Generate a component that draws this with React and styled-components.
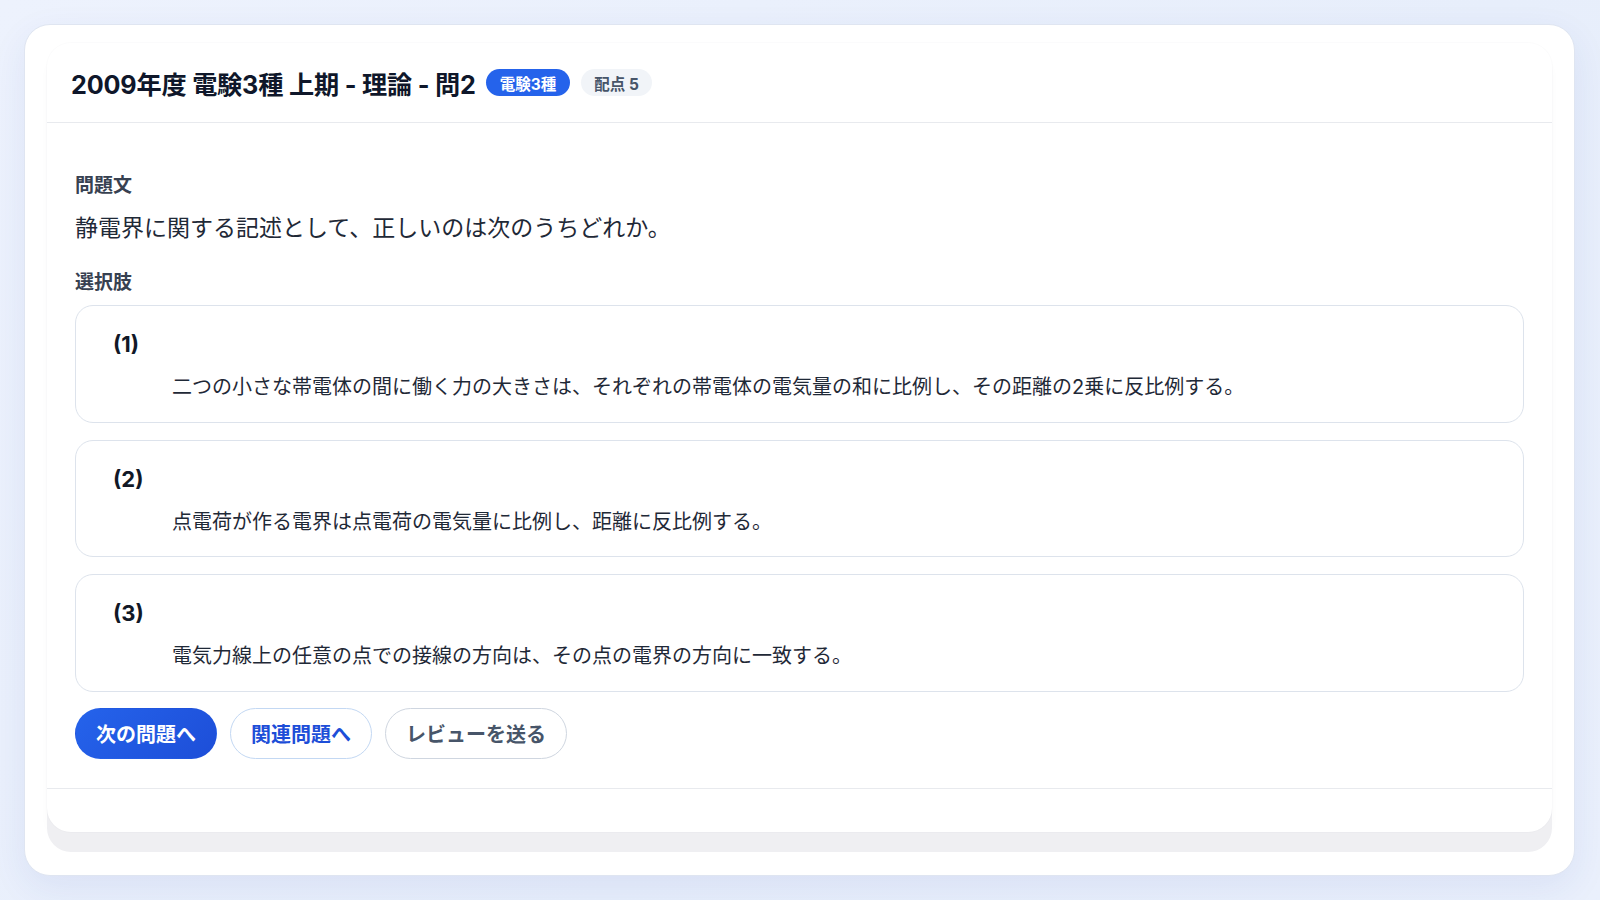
import React from "react";
import styled, { createGlobalStyle } from "styled-components";

const GlobalStyle = createGlobalStyle`
  html, body {
    margin: 0;
    padding: 0;
  }
  body {
    background: linear-gradient(135deg, #edf2fd 0%, #e7eefb 60%, #eaf0fc 100%);
    font-family: Inter, "Noto Sans CJK JP", sans-serif;
    color: #1f2937;
  }
  * {
    box-sizing: border-box;
  }
`;

const Page = styled.div`
  padding: 24px 25px 25px 24px;
`;

const Shell = styled.div`
  background: #fff;
  border: 1px solid #dfe5f1;
  border-radius: 26px;
  box-shadow: 0 12px 36px rgba(37, 70, 160, 0.08);
  padding: 18px 22px 43px 22px;
`;

const Card = styled.div`
  background: #fff;
  border-radius: 24px;
  box-shadow: 0 0 0 1px rgba(15, 23, 42, 0.015), 0 20px 0 #efeff2,
    0 10px 8px rgba(15, 23, 42, 0.025);
`;

const Header = styled.div`
  height: 80px;
  display: flex;
  align-items: center;
  padding: 0 24px;
  border-bottom: 1px solid #e8eaee;
`;

const Title = styled.h1`
  margin: 0;
  font-size: 25.2px;
  font-weight: 700;
  color: #0f172a;
  letter-spacing: -0.2px;
`;

const Badge = styled.span`
  display: inline-flex;
  align-items: center;
  height: 27px;
  padding: 0 ${(p) => (p.$primary ? "14px" : "13px")};
  margin-left: ${(p) => (p.$primary ? "10px" : "11px")};
  border-radius: 999px;
  font-size: 15.5px;
  font-weight: 700;
  background: ${(p) => (p.$primary ? "#2563eb" : "#f1f4f8")};
  color: ${(p) => (p.$primary ? "#fff" : "#475569")};
`;

const Body = styled.div`
  padding: 49px 28px 28.5px 28px;
  display: flex;
  flex-direction: column;
`;

const Label = styled.div`
  font-size: 19px;
  line-height: 28px;
  font-weight: 700;
  color: #374151;
  margin-top: ${(p) => p.$top || "0"};
`;

const Question = styled.p`
  margin: 11px 0 0;
  font-size: 23px;
  line-height: 34px;
  color: #1f2937;
`;

const Options = styled.div`
  margin-top: 8px;
  display: flex;
  flex-direction: column;
  gap: 17px;
`;

const Option = styled.div`
  border: 1px solid #dde3ec;
  border-radius: 18px;
  padding: 23px 36px 19.5px 37px;
  background: #fff;
`;

const OptionNo = styled.div`
  font-size: 22px;
  line-height: 30px;
  font-weight: 700;
  color: #111827;
`;

const OptionText = styled.div`
  margin-top: 13px;
  padding-left: 59px;
  font-size: 20px;
  line-height: 30px;
  color: #1f2937;
`;

const Actions = styled.div`
  margin-top: 16.5px;
  display: flex;
  gap: 13px;
`;

const variants = {
  primary: `
    background: linear-gradient(135deg, #2563eb, #1d4ed8);
    border-color: transparent;
    color: #fff;
  `,
  outline: `
    background: #fff;
    border-color: #c3d8f3;
    color: #1d4ed8;
  `,
  ghost: `
    background: #fff;
    border-color: #cfd6e0;
    color: #475569;
  `,
};

const Button = styled.button`
  height: 51px;
  padding: 0 20px;
  border-radius: 999px;
  border: 1px solid transparent;
  font-family: inherit;
  font-size: 20px;
  font-weight: 700;
  cursor: pointer;
  ${(p) => variants[p.$variant]}
`;

const Footer = styled.div`
  height: 44px;
  border-top: 1px solid #e8eaee;
`;

const options = [
  {
    no: "(1)",
    text: "二つの小さな帯電体の間に働く力の大きさは、それぞれの帯電体の電気量の和に比例し、その距離の2乗に反比例する。",
  },
  {
    no: "(2)",
    text: "点電荷が作る電界は点電荷の電気量に比例し、距離に反比例する。",
  },
  {
    no: "(3)",
    text: "電気力線上の任意の点での接線の方向は、その点の電界の方向に一致する。",
  },
];

export default function App() {
  return (
    <Page>
      <GlobalStyle />
      <Shell>
        <Card>
          <Header>
            <Title>2009年度 電験3種 上期 - 理論 - 問2</Title>
            <Badge $primary>電験3種</Badge>
            <Badge>配点 5</Badge>
          </Header>
          <Body>
            <Label>問題文</Label>
            <Question>静電界に関する記述として、正しいのは次のうちどれか。</Question>
            <Label $top="24px">選択肢</Label>
            <Options>
              {options.map((o) => (
                <Option key={o.no}>
                  <OptionNo>{o.no}</OptionNo>
                  <OptionText>{o.text}</OptionText>
                </Option>
              ))}
            </Options>
            <Actions>
              <Button $variant="primary">次の問題へ</Button>
              <Button $variant="outline">関連問題へ</Button>
              <Button $variant="ghost">レビューを送る</Button>
            </Actions>
          </Body>
          <Footer />
        </Card>
      </Shell>
    </Page>
  );
}
